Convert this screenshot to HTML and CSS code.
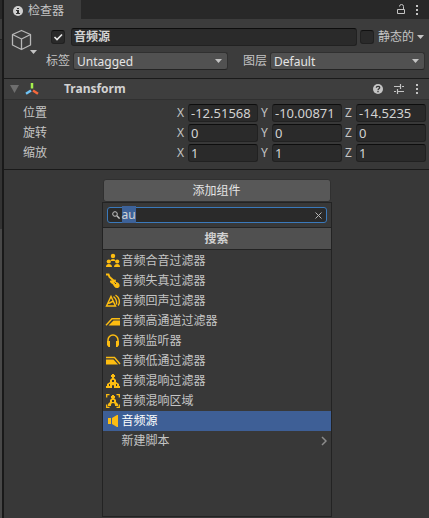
FILE: index.html
```html
<!DOCTYPE html>
<html lang="zh-CN">
<head>
<meta charset="utf-8">
<title>检查器</title>
<link rel="stylesheet" href="styles.css">
</head>
<body>
<div class="window">
  <div class="neighbour"></div>
  <main class="inspector">
    <header class="tabbar">
      <div class="tab">
        <svg width="10" height="10" viewBox="0 0 10 10"><circle cx="5" cy="5" r="5" fill="#d0d0d0"/><path d="M4 4h2v3h1v1H3V7h1V5H3V4zM4 2h2v1H4z" fill="#333"/></svg>
        <span>检查器</span>
      </div>
      <div class="tab-tools">
        <button class="icon-button" aria-label="锁定"><svg width="10" height="12" viewBox="0 0 10 12" fill="none" stroke="#c4c4c4"><path d="M1.500 5.500h7v4h-7zM7.500 5V2.500a2 2 0 0 0-4 0"/></svg></button>
        <button class="icon-button" aria-label="菜单"><svg width="4" height="12" viewBox="0 0 4 12" fill="#c4c4c4"><path d="M1 1h2v2H1zM1 5h2v2H1zM1 9h2v2H1z"/></svg></button>
      </div>
    </header>

    <section class="object">
      <button class="object-icon" aria-label="选择图标">
        <svg width="28" height="28" viewBox="0 0 28 28"><path d="M11.500 2.500l9 4v10.500l-9 4.500-9-4.500V6.500zM2.500 6.500l9 4.500 9-4.500M11.500 11v10.500" fill="none" stroke="#b8b8b8" stroke-width="1.300" stroke-linejoin="round"/><path d="M20 22h7l-3.500 4z" fill="#c4c4c4"/></svg>
      </button>
      <div class="object-fields">
        <div class="name-row">
          <input type="checkbox" class="check" checked aria-label="启用">
          <input type="text" class="field name" value="音频源" aria-label="名称">
          <label class="static"><input type="checkbox" class="check"><span>静态的</span></label>
          <button class="icon-button" aria-label="静态选项"><svg width="7" height="4" viewBox="0 0 7 4"><path d="M0 0h7L3.500 4z" fill="#c4c4c4"/></svg></button>
        </div>
        <div class="tag-row">
          <label for="tag">标签</label>
          <select id="tag" class="select"><option>Untagged</option></select>
          <label for="layer" class="layer-label">图层</label>
          <select id="layer" class="select"><option>Default</option></select>
        </div>
      </div>
    </section>

    <section class="component">
      <div class="component-head">
        <button class="icon-button" aria-label="折叠"><svg width="9" height="8" viewBox="0 0 9 8"><path d="M0 0h9L4.500 8z" fill="#6e6e6e"/></svg></button>
        <svg class="gizmo" width="14" height="13" viewBox="0 0 14 13" fill="none" stroke-width="2.500"><path d="M7 0v5.500" stroke="#a5f04d"/><path d="M6 7.500L1 10.800" stroke="#6fc3f5"/><path d="M8 7.500l5 3.300" stroke="#f5683c"/></svg>
        <h2>Transform</h2>
        <div class="component-tools">
          <button class="icon-button" aria-label="帮助"><svg width="10" height="10" viewBox="0 0 10 10"><circle cx="5" cy="5" r="5" fill="#c4c4c4"/><path d="M3.300 3.800C3.300 1.800 6.700 1.800 6.700 3.700 6.700 4.900 5 4.700 5 6.200M5 7v1.300" fill="none" stroke="#333" stroke-width="1.300"/></svg></button>
          <button class="icon-button" aria-label="预设"><svg width="10" height="10" viewBox="0 0 10 10" fill="none" stroke="#c4c4c4" stroke-width="1.200"><path d="M0 2.500h6M8 2.500h2M6.500 0v5M0 7.500h2M4 7.500h6M3.500 5v5"/></svg></button>
          <button class="icon-button" aria-label="更多"><svg width="4" height="10" viewBox="0 0 4 10" fill="#c4c4c4"><path d="M1 0h2v2H1zM1 4h2v2H1zM1 8h2v2H1z"/></svg></button>
        </div>
      </div>
      <div class="component-body">
        <div class="vector">
          <span class="vector-name">位置</span>
          <label><span>X</span><input class="field" value="-12.51568"></label>
          <label><span>Y</span><input class="field" value="-10.00871"></label>
          <label><span>Z</span><input class="field" value="-14.5235"></label>
        </div>
        <div class="vector">
          <span class="vector-name">旋转</span>
          <label><span>X</span><input class="field" value="0"></label>
          <label><span>Y</span><input class="field" value="0"></label>
          <label><span>Z</span><input class="field" value="0"></label>
        </div>
        <div class="vector">
          <span class="vector-name">缩放</span>
          <label><span>X</span><input class="field" value="1"></label>
          <label><span>Y</span><input class="field" value="1"></label>
          <label><span>Z</span><input class="field" value="1"></label>
        </div>
      </div>
    </section>

    <section class="adder">
      <button class="add-button">添加组件</button>
      <div class="picker">
        <div class="search">
          <svg width="8" height="8" viewBox="0 0 8 8" fill="none" stroke="#c4c4c4"><circle cx="3" cy="3" r="2.300"/><path d="M4.800 4.800L7.600 7.600" stroke-width="1.400"/></svg>
          <div class="search-text" role="textbox" contenteditable="true" aria-label="搜索组件"><mark>au</mark></div>
          <button class="icon-button" aria-label="清除"><svg width="7" height="7" viewBox="0 0 7 7" stroke="#b4b4b4"><path d="M.5.5l6 6M6.500.5l-6 6"/></svg></button>
        </div>
        <h3>搜索</h3>
        <ul class="results">
          <li><svg viewBox="0 0 16 16"><g fill="#fdbd11"><circle cx="8" cy="3" r="2.200"/><path d="M5.500 8a2.500 2 0 0 1 5 0z"/><circle cx="3.800" cy="8.500" r="2.100"/><path d="M1 14c0-2 1-3 2.800-3s3.200 1 3.200 3z"/><circle cx="12.200" cy="8.500" r="2.100"/><path d="M9 14c0-2 1.400-3 3.200-3s2.800 1 2.800 3z"/></g></svg><button>音频合音过滤器</button></li>
          <li><svg viewBox="0 0 16 16"><path d="M1 1.500L3.500 1.500 4.500 4 9.500 8.500" fill="none" stroke="#fdbd11" stroke-width="2"/><path d="M5 8c1-1.800 2.500.3 3.500-.8s2.800-.8 2.300.8 1.200 1 2.200 1.700c2.800 2 1.800 5.300-1 5.300-2.600 0-3-2-4-3.500-.7-1-3.300-1.500-3-3.500z" fill="#fdbd11"/><path d="M9.500 9.500l1.500 1.500" stroke="#383838"/></svg><button>音频失真过滤器</button></li>
          <li><svg viewBox="0 0 16 16" fill="none" stroke="#fdbd11" stroke-width="1.400"><path d="M1.500 13L6 3.500l4.500 9.500zM3.500 10.500l5-2.500M8.500 3.500c2 1.500 3.500 4 3 8M10.500 2c4 2.500 5 7 2.700 10.500"/></svg><button>音频回声过滤器</button></li>
          <li><svg viewBox="0 0 16 16"><path d="M1 12.300L7 5.700h8" fill="none" stroke="#fdbd11" stroke-width="1.400"/><path d="M3.500 12.500l5-5H15v5z" fill="#fdbd11"/></svg><button>音频高通道过滤器</button></li>
          <li><svg viewBox="0 0 16 16"><path d="M3 10V7a5 5 0 0 1 10 0v3" fill="none" stroke="#fdbd11" stroke-width="1.500"/><path d="M2 8h3v6H3.500L2 12zM11 8h3v4l-1.500 2H11z" fill="#fdbd11"/></svg><button>音频监听器</button></li>
          <li><svg viewBox="0 0 16 16"><path d="M1 4.500h8.500l5.500 6.500" fill="none" stroke="#fdbd11" stroke-width="1.400"/><path d="M1 6.500h7.500L13 11.500H1z" fill="#fdbd11"/></svg><button>音频低通过滤器</button></li>
          <li><svg viewBox="0 0 16 16"><path d="M7 1h2v1h1v2H9v1l2 2v2l3 2v2h1v2H9v-2a1 1 0 0 0-2 0v2H1v-2h1v-2l3-2V7l2-2V4H6V2h1z" fill="#fdbd11"/><path d="M7 7h2v2H7zM4 11h1v2H4zM11 11h1v2h-1z" fill="#383838"/></svg><button>音频混响过滤器</button></li>
          <li><svg viewBox="0 0 16 16"><path d="M7 2h2v1h1v2H9l2 2v2l2 2v2h-3v-1a2 2 0 0 0-4 0v1H3v-2l2-2V7l2-2H6V3h1z" fill="#fdbd11"/><path d="M7 7h2v2H7z" fill="#383838"/><path d="M1.700 4.500V1.700h2.800M11.500 1.700h2.800v2.800M1.700 11.500v2.800h2.800M11.500 14.300h2.800v-2.800" fill="none" stroke="#fdbd11" stroke-width="1.300"/></svg><button>音频混响区域</button></li>
          <li class="selected"><svg viewBox="0 0 16 16" fill="#fdbd11"><path d="M3 5h3v6H3zM7 5l5-3h1v12h-1l-5-3z"/></svg><button>音频源</button></li>
          <li><svg viewBox="0 0 16 16"></svg><button>新建脚本</button><svg class="chevron" viewBox="0 0 6 10"><path d="M1 1l4 4-4 4" fill="none" stroke="#8c8c8c" stroke-width="1.500"/></svg></li>
        </ul>
      </div>
    </section>
  </main>
</div>
</body>
</html>
```
FILE: styles.css
```css
* { box-sizing: border-box; }

body {
  margin: 0;
  background: #383838;
  color: #c4c4c4;
  font: 12px/18px "Noto Sans", "Noto Sans CJK SC", sans-serif;
}

button, input, select {
  margin: 0;
  padding: 0;
  border: 0;
  background: none;
  color: inherit;
  font: inherit;
}

svg { display: block; flex: none; }

.window { display: flex; min-height: 100vh; }

/* Edge of the docked panel to the left */
.neighbour {
  width: 4px;
  background: linear-gradient(#282828 19px, #3c3c3c 19px 39px, #232323 39px 40px, #333 40px 229px, #484848 229px);
  border-right: 2px solid #191919;
}

.inspector {
  flex: 1;
  min-width: 0;
  display: flex;
  flex-direction: column;
}

.icon-button { display: flex; align-items: center; justify-content: center; }

/* Tab bar */
.tabbar {
  display: flex;
  justify-content: space-between;
  height: 19px;
  background: #282828;
}

.tab {
  display: flex;
  align-items: center;
  gap: 5px;
  padding: 2px 17px 0 9px;
  background: #3c3c3c;
}

.tab-tools { display: flex; align-items: center; gap: 9px; padding-right: 10px; }

/* Object header */
.object {
  display: flex;
  gap: 13px;
  padding: 9px 4px 8px 6px;
  background: #3c3c3c;
  border-bottom: 1px solid #1a1a1a;
}

.object-icon { align-self: flex-start; }
.object-fields { flex: 1; min-width: 0; }
.name-row, .tag-row { display: flex; align-items: center; }
.name-row { gap: 3px; margin-bottom: 6px; padding-right: 1px; }
.tag-row { margin-left: -5px; }
.tag-row label { width: 27px; flex: none; }
.tag-row .layer-label { margin-left: 15px; }

.check {
  appearance: none;
  flex: none;
  display: block;
  width: 14px;
  height: 14px;
  border: 1px solid #212121;
  border-top-color: #111;
  border-radius: 3px;
  background: #2a2a2a;
}

.check:checked {
  background: #2a2a2a url("data:image/svg+xml,%3Csvg xmlns='http://www.w3.org/2000/svg' width='10' height='8'%3E%3Cpath d='M1.500 4l2.500 2.500 5-5' fill='none' stroke='%23e8e8e8' stroke-width='1.600'/%3E%3C/svg%3E") no-repeat center;
}

.static { display: flex; align-items: center; gap: 4px; }

.field {
  flex: 1;
  min-width: 0;
  width: 100%;
  height: 18px;
  padding: 0 2px;
  border: 1px solid #212121;
  border-top-color: #0d0d0d;
  border-radius: 3px;
  background: #2a2a2a;
  color: #d2d2d2;
}

.name { margin-left: 3px; font-weight: 700; }

.select {
  appearance: none;
  flex: 1;
  min-width: 0;
  height: 18px;
  padding: 0 3px;
  border: 1px solid #303030;
  border-bottom-color: #242424;
  border-radius: 3px;
  background: #515151 url("data:image/svg+xml,%3Csvg xmlns='http://www.w3.org/2000/svg' width='7' height='4'%3E%3Cpath d='M0 0h7L3.500 4z' fill='%23c4c4c4'/%3E%3C/svg%3E") no-repeat right 5px center;
  color: #e4e4e4;
}

/* Component */
.component { border-bottom: 1px solid #1a1a1a; }

.component-head {
  display: flex;
  align-items: center;
  height: 21px;
  padding: 0 10px 0 6px;
  background: #3e3e3e;
  border-bottom: 1px solid #303030;
}

.gizmo { margin-left: 6px; }

h2, h3 { margin: 0; font-size: 12px; font-weight: 700; color: #d2d2d2; }
h2 { margin-left: 25px; }

.component-tools { display: flex; gap: 11px; margin-left: auto; }

.component-body { display: grid; gap: 2px; padding: 4px 3px 7px 19px; }

.vector {
  display: grid;
  grid-template-columns: 151fr 81fr 81fr 81fr;
  column-gap: 3px;
}

.vector label { display: flex; }
.vector label span { width: 11px; flex: none; }
.vector .field { font-size: 13px; }

/* Component picker */
.adder {
  flex: 1;
  display: flex;
  flex-direction: column;
  width: 54%;
  min-width: 230px;
  margin: 9px auto 0;
  padding-bottom: 1px;
}

.add-button {
  height: 23px;
  margin: 0 1px;
  border: 1px solid #303030;
  border-radius: 3px;
  background: #585858;
  color: #e4e4e4;
}

.picker { flex: 1; border: 1px solid #232323; }

.search {
  display: flex;
  align-items: center;
  gap: 2px;
  height: 16px;
  margin: 4px;
  padding: 0 4px;
  border: 1px solid #3a79bb;
  border-radius: 3px;
  background: #2a2a2a;
  line-height: 14px;
}

.search-text { flex: 1; outline: 0; }
mark { background: #3d6299; color: #d2d2d2; }

h3 {
  height: 23px;
  border: solid #232323;
  border-width: 1px 0;
  background: #505050;
  line-height: 21px;
  text-align: center;
}

.results { margin: 0; padding: 1px 0 0; list-style: none; }
.results li { display: flex; align-items: center; gap: 1px; height: 20px; padding: 0 4px 0 2px; }
.results li svg { width: 16px; height: 16px; }
.results button { flex: 1; text-align: left; line-height: 20px; }
.results .selected { background: #3e5f96; color: #fff; }
.results li .chevron { width: 6px; height: 10px; }
```
